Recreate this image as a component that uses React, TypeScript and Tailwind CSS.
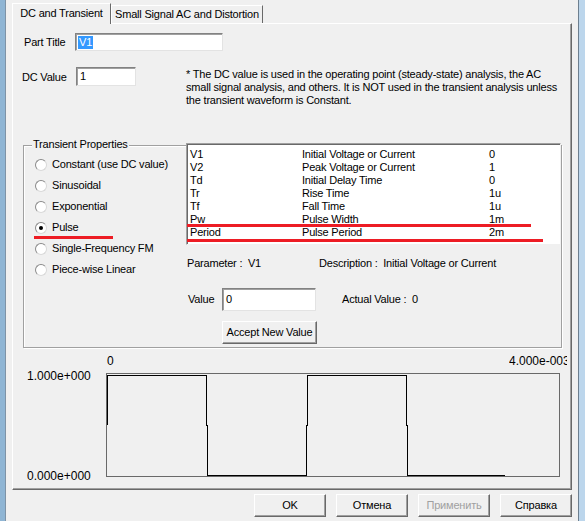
import React from 'react';

const params = [
  ['V1', 'Initial Voltage or Current', '0'],
  ['V2', 'Peak Voltage or Current', '1'],
  ['Td', 'Initial Delay Time', '0'],
  ['Tr', 'Rise Time', '1u'],
  ['Tf', 'Fall Time', '1u'],
  ['Pw', 'Pulse Width', '1m'],
  ['Period', 'Pulse Period', '2m'],
];

const waveforms = [
  'Constant (use DC value)',
  'Sinusoidal',
  'Exponential',
  'Pulse',
  'Single-Frequency FM',
  'Piece-wise Linear',
];

function Radio({ label, checked }: { label: string; checked?: boolean }) {
  return (
    <div className="flex items-center h-[21px]">
      <span className="w-[12px] h-[12px] rounded-full bg-white border border-t-[#8a8a8a] border-l-[#8a8a8a] border-r-[#d8d8d8] border-b-[#d8d8d8] flex items-center justify-center">
        {checked && <span className="w-[4px] h-[4px] rounded-full bg-black" />}
      </span>
      <span className="ml-[5px]">{label}</span>
    </div>
  );
}

function Button({ children, disabled, className = '' }: { children: React.ReactNode; disabled?: boolean; className?: string }) {
  return (
    <div
      className={`flex items-center justify-center bg-[#f0f0f0] border border-t-white border-l-white border-r-[#696969] border-b-[#696969] shadow-[inset_-1px_-1px_0_#a0a0a0] ${disabled ? 'text-[#a0a0a0]' : 'text-black'} ${className}`}
    >
      {children}
    </div>
  );
}

const sunken = 'bg-white border border-t-[#828282] border-l-[#828282] border-r-[#e3e3e3] border-b-[#e3e3e3] shadow-[inset_1px_1px_0_#a0a0a0]';

export default function App() {
  return (
    <div className="w-[585px] h-[521px] bg-[#f0f0f0] flex overflow-hidden text-[11px] leading-[13px] tracking-[-0.2px] text-black font-['Liberation_Sans',Arial,sans-serif]">
      {/* left window edge */}
      <div className="w-[6px] bg-[#8fb5d4] border-r border-[#7e93a6]" />

      <div className="flex-1 flex flex-col pl-[6px]">
        {/* tabs */}
        <div className="flex h-[23px] items-end pt-[3px]">
          <div className="relative z-10 w-[99px] h-[21px] mb-[-1px] bg-[#f0f0f0] border-t border-l border-white border-r border-r-[#696969] flex items-center justify-center pb-[1px]">
            DC and Transient
          </div>
          <div className="w-[152px] h-[18px] bg-[#f0f0f0] border-t border-l border-white border-r border-r-[#696969] flex items-center justify-center">
            Small Signal AC and Distortion
          </div>
        </div>

        {/* tab panel */}
        <div className="relative w-[560px] h-[467px] border border-t-white border-l-white border-r-[#696969] border-b-[#696969] shadow-[inset_-1px_-1px_0_#a0a0a0] flex flex-col">
          <div className="flex items-center mt-[9px] pl-[11px]">
            <span className="w-[51px]">Part Title</span>
            <div className={`w-[148px] h-[18px] flex items-center pl-[2px] ${sunken}`}>
              <span className="bg-[#3399ff] text-white px-[1px]">V1</span>
            </div>
          </div>

          <div className="flex items-start mt-[16px] pl-[9px]">
            <span className="w-[54px] mt-[4px]">DC Value</span>
            <div className={`w-[60px] h-[19px] flex items-center pl-[3px] ${sunken}`}>1</div>
            <p className="ml-[50px] mt-[1px] whitespace-nowrap">
              * The DC value is used in the operating point (steady-state) analysis, the AC
              <br />
              small signal analysis, and others. It is NOT used in the transient analysis unless
              <br />
              the transient waveform is Constant.
            </p>
          </div>

          {/* Transient Properties group */}
          <div className="relative ml-[10px] mt-[38px] w-[539px] h-[203px] border border-[#a0a0a0] shadow-[1px_1px_0_white,inset_1px_1px_0_white] flex">
            <span className="absolute top-[-8px] left-[8px] bg-[#f0f0f0] px-[1px]">Transient Properties</span>

            <div className="w-[162px] pl-[11px] pt-[8px]">
              {waveforms.map(w => (
                <Radio key={w} label={w} checked={w === 'Pulse'} />
              ))}
            </div>

            <div className="flex flex-col">
              <div className="w-[375px] h-[102px] mt-[-3px] bg-white border border-t-[#a0a0a0] border-l-[#a0a0a0] border-r-[#f0f0f0] border-b-[#f0f0f0] shadow-[inset_1px_1px_0_#696969] pt-[4px] pl-[3px]">
                {params.map(([name, desc, val]) => (
                  <div key={name} className="flex h-[13px] items-center">
                    <span className="w-[112px]">{name}</span>
                    <span className="w-[187px]">{desc}</span>
                    <span>{val}</span>
                  </div>
                ))}
              </div>

              <div className="flex mt-[12px] pl-[1px]">
                <span className="w-[132px]">Parameter :&nbsp; V1</span>
                <span>Description :&nbsp; Initial Voltage or Current</span>
              </div>

              <div className="flex items-center mt-[18px] pl-[2px]">
                <span className="w-[34px]">Value</span>
                <div className={`w-[94px] h-[23px] flex items-center pl-[3px] ${sunken}`}>0</div>
                <span className="ml-[26px]">Actual Value :&nbsp; 0</span>
              </div>

              <Button className="ml-[36px] mt-[10px] w-[95px] h-[23px]">Accept New Value</Button>
            </div>

            {/* red annotation marks */}
            <div className="absolute left-[10px] top-[90px] w-[79px] h-[3px] bg-[#ed1c24]" />
            <div className="absolute left-[163px] top-[78px] w-[344px] h-[3px] bg-[#ed1c24]" />
            <div className="absolute left-[163px] top-[93px] w-[356px] h-[3px] bg-[#ed1c24]" />
          </div>

          {/* waveform preview */}
          <div className="flex pl-[14px] mt-[7px] text-[12px] tracking-normal">
            <div className="w-[79px] h-[113px] mt-[15px] flex flex-col justify-between">
              <span>1.000e+000</span>
              <span>0.000e+000</span>
            </div>
            <div className="flex flex-col">
              <div className="flex justify-between w-[461px] h-[18px] pl-[1px]">
                <span>0</span>
                <span className="w-[58px] overflow-hidden whitespace-nowrap">4.000e-003</span>
              </div>
              <svg width="454" height="104" viewBox="0 0 454 104" shapeRendering="crispEdges">
                <rect x="0.5" y="0.5" width="453" height="103" fill="none" stroke="#696969" />
                <polyline
                  fill="none"
                  stroke="#000"
                  strokeWidth="1"
                  points="1.5,52 1.5,2.5 100.5,2.5 100.5,52 101.5,52 101.5,102.5 200.5,102.5 200.5,52 201.5,52 201.5,2.5 300.5,2.5 300.5,52 301.5,52 301.5,102.5 399,102.5"
                />
              </svg>
            </div>
          </div>
        </div>

        {/* dialog buttons */}
        <div className="flex mt-[4px] pl-[242px] gap-[10px]">
          <Button className="w-[72px] h-[23px]">OK</Button>
          <Button className="w-[72px] h-[23px]">Отмена</Button>
          <Button className="w-[72px] h-[23px]" disabled>Применить</Button>
          <Button className="w-[72px] h-[23px]">Справка</Button>
        </div>
      </div>

      {/* right window edge */}
      <div className="w-[7px] bg-[#bcd6ec] border-l border-[#6d7f8f]" />
    </div>
  );
}
